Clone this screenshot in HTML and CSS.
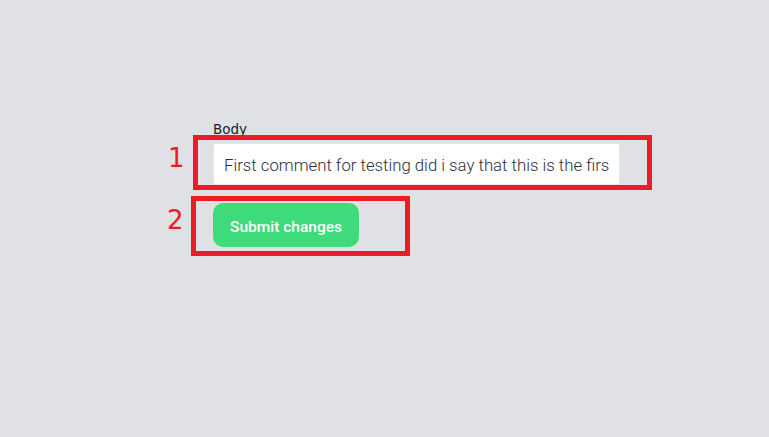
FILE: index.html
```html
<!DOCTYPE html>
<html lang="en">
<head>
<meta charset="utf-8">
<title>Edit comment</title>
<link rel="stylesheet" href="styles.css">
</head>
<body>
  <main class="page">
    <form class="form">
      <label class="field-label" for="body">Body</label>
      <div class="text-input" id="body">First comment for testing did i say that this is the firs</div>
      <button type="button" class="submit">Submit changes</button>
    </form>
  </main>
  <div class="mark mark-1"></div>
  <div class="mark mark-2"></div>
  <span class="mark-num num-1">1</span>
  <span class="mark-num num-2">2</span>
</body>
</html>
```

FILE: styles.css
```css
html, body {
  margin: 0;
  padding: 0;
}
body {
  background: #e0e1e5;
  width: 769px;
  height: 437px;
  overflow: hidden;
  position: relative;
}
.page {
  padding: 120px 0 0 213px;
}
.form {
  display: flex;
  flex-direction: column;
  align-items: flex-start;
}
.field-label {
  font-family: "DejaVu Sans", sans-serif;
  font-size: 13.5px;
  line-height: 18px;
  color: #1c1c28;
  margin-bottom: 5px;
}
.text-input {
  box-sizing: border-box;
  width: 407px;
  height: 42px;
  padding: 2px 10px 0;
  background: #ffffff;
  border: 1px solid #e7e8ea;
  border-radius: 3px;
  font-family: Roboto, sans-serif;
  font-weight: 300;
  font-size: 16.75px;
  line-height: 38px;
  color: #2e2e3a;
  white-space: nowrap;
  overflow: hidden;
}
.submit {
  margin-top: 18px;
  width: 146px;
  height: 44px;
  border: none;
  border-radius: 10px;
  background: #3ddb7a;
  color: #ffffff;
  font-family: Roboto, sans-serif;
  font-weight: 500;
  font-size: 15.5px;
  padding: 3px 0 0;
}
.mark {
  position: absolute;
  box-sizing: border-box;
  border: 5px solid #ed1c24;
}
.mark-1 {
  left: 193px;
  top: 135px;
  width: 459px;
  height: 55px;
}
.mark-2 {
  left: 191px;
  top: 196px;
  width: 219px;
  height: 60px;
}
.mark-num {
  position: absolute;
  font-family: "DejaVu Sans", sans-serif;
  font-size: 26px;
  line-height: 30px;
  color: #ed1c24;
}
.num-1 {
  left: 168px;
  top: 143px;
}
.num-2 {
  left: 167px;
  top: 205px;
}
```
